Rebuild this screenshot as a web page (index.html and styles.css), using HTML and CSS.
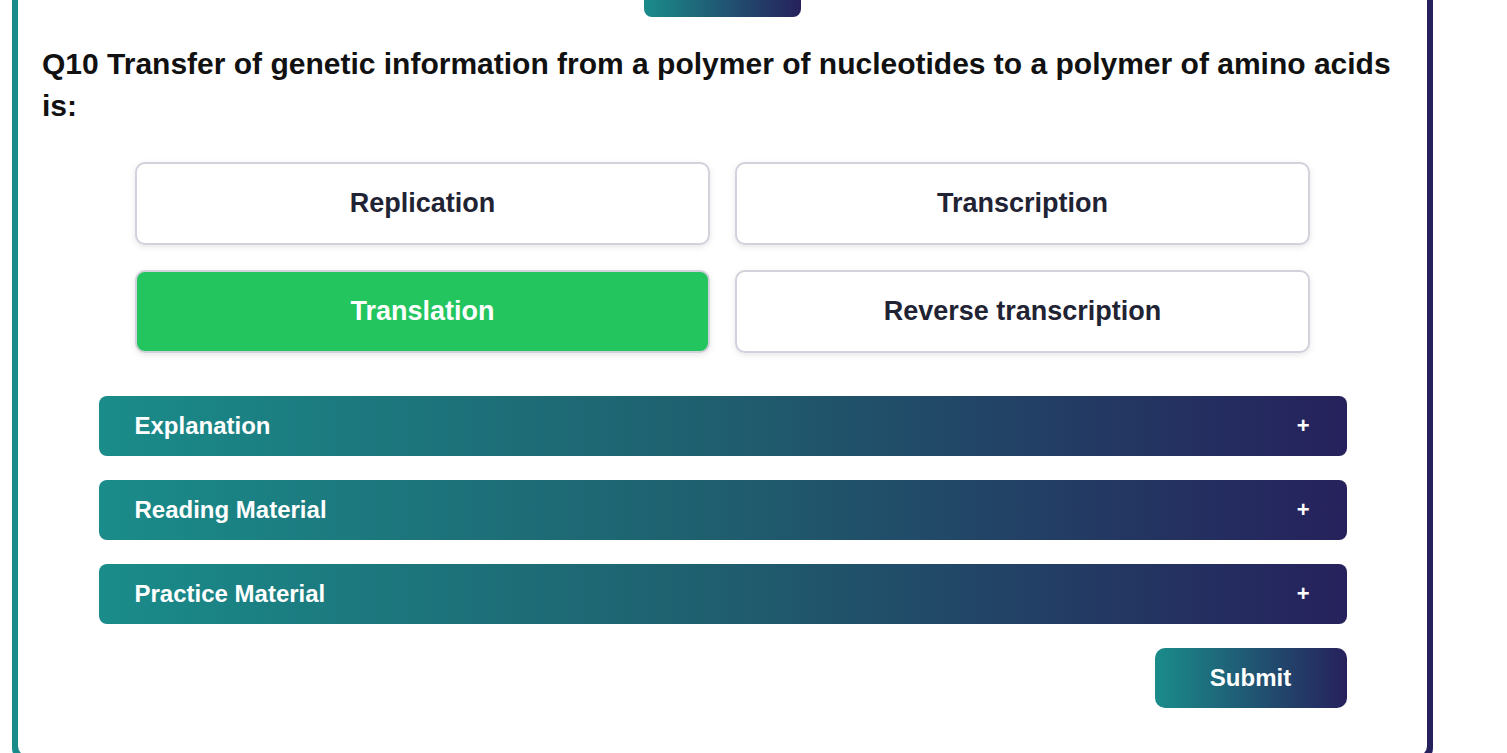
FILE: index.html
```html
<!DOCTYPE html>
<html lang="en">
<head>
<meta charset="utf-8">
<title>Quiz</title>
<link rel="stylesheet" href="styles.css">
</head>
<body>
<div class="frame">
  <div class="card">
    <div class="tab-row"><div class="tab"></div></div>
    <h2 class="question">Q10 Transfer of genetic information from a polymer of nucleotides to a polymer of amino acids is:</h2>
    <div class="options">
      <button class="option">Replication</button>
      <button class="option">Transcription</button>
      <button class="option correct">Translation</button>
      <button class="option">Reverse transcription</button>
    </div>
    <div class="sections">
      <div class="accordion"><span>Explanation</span><span class="plus">+</span></div>
      <div class="accordion"><span>Reading Material</span><span class="plus">+</span></div>
      <div class="accordion"><span>Practice Material</span><span class="plus">+</span></div>
      <div class="actions"><button class="submit">Submit</button></div>
    </div>
  </div>
</div>
</body>
</html>
```
FILE: styles.css
```css
html, body {
  margin: 0;
  padding: 0;
  background: #ffffff;
  overflow: hidden;
  font-family: "Liberation Sans", Arial, sans-serif;
}
.frame {
  width: 1421px;
  margin-left: 12px;
  padding: 0 6px 6px;
  box-sizing: border-box;
  background: linear-gradient(90deg, #1a8c8a 0%, #26215c 100%);
  border-radius: 0 0 14px 14px;
}
.card {
  background: #ffffff;
  border-radius: 0 0 10px 10px;
  padding: 0 24px 48px;
}
.tab-row {
  display: flex;
  justify-content: center;
}
.tab {
  width: 157px;
  height: 17px;
  border-radius: 0 0 8px 8px;
  background: linear-gradient(90deg, #1a8c8a, #26215c);
}
.question {
  margin: 26px 0 0;
  font-size: 30px;
  line-height: 42px;
  font-weight: 700;
  color: #111111;
}
.options {
  width: 1175px;
  margin: 35px auto 0;
  display: grid;
  grid-template-columns: 1fr 1fr;
  gap: 25px;
}
.option {
  height: 83px;
  border: 2px solid #d2d2dc;
  border-radius: 10px;
  background: #ffffff;
  font-family: "Liberation Sans", Arial, sans-serif;
  font-size: 27px;
  font-weight: 700;
  color: #1f2333;
  box-shadow: 0 2px 6px rgba(0, 0, 0, 0.1);
  cursor: pointer;
}
.option.correct {
  background: #22c55e;
  color: #ffffff;
}
.sections {
  width: 1248px;
  margin: 43px auto 0;
  display: flex;
  flex-direction: column;
  gap: 24px;
}
.accordion {
  height: 60px;
  border-radius: 8px;
  padding: 0 37px 0 36px;
  display: flex;
  align-items: center;
  justify-content: space-between;
  background: linear-gradient(90deg, #1a8c8a 0%, #1f5e6e 50%, #26215c 100%);
  color: #ffffff;
  font-size: 24px;
  font-weight: 700;
}
.plus {
  font-size: 22px;
}
.actions {
  display: flex;
  justify-content: flex-end;
}
.submit {
  width: 192px;
  height: 60px;
  border: none;
  border-radius: 10px;
  background: linear-gradient(90deg, #1a8c8a, #26215c);
  color: #ffffff;
  font-family: "Liberation Sans", Arial, sans-serif;
  font-size: 24px;
  font-weight: 700;
}
```
